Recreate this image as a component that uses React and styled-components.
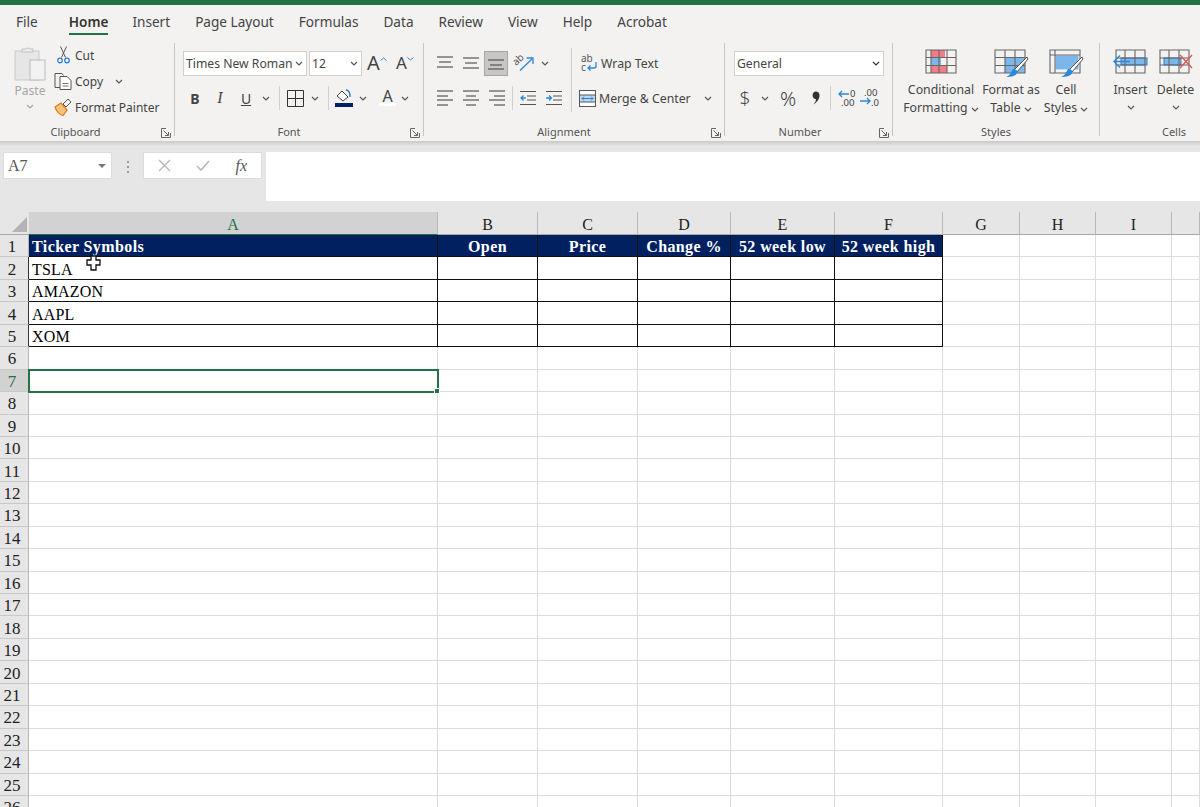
import React from 'react';
import styled, { createGlobalStyle } from 'styled-components';

const GlobalStyle = createGlobalStyle`
  html, body {
    margin: 0;
    padding: 0;
    background: #fff;
    overflow: hidden;
  }
  svg {
    overflow: visible;
  }
`;

const tabs = ['File', 'Home', 'Insert', 'Page Layout', 'Formulas', 'Data', 'Review', 'View', 'Help', 'Acrobat'];

const columns = [
  { name: 'A', width: 409 },
  { name: 'B', width: 100 },
  { name: 'C', width: 100 },
  { name: 'D', width: 93 },
  { name: 'E', width: 104 },
  { name: 'F', width: 108 },
  { name: 'G', width: 77 },
  { name: 'H', width: 76 },
  { name: 'I', width: 76 },
  { name: '', width: 28 },
];

const headings = ['Ticker Symbols', 'Open', 'Price', 'Change %', '52 week low', '52 week high'];
const tickers = ['TSLA', 'AMAZON', 'AAPL', 'XOM'];
const rowNumbers = Array.from({ length: 26 }, (_, i) => i + 1);

const Chev = ({ color = '#555' }) => (
  <svg width="8" height="5" viewBox="0 0 8 5">
    <path d="M1 1l3 3 3-3" fill="none" stroke={color} strokeWidth="1.2" />
  </svg>
);

const PasteIcon = () => (
  <svg width="32" height="35" viewBox="0 0 32 35">
    <rect x="1" y="5" width="24" height="29" fill="#e6e6e6" stroke="#c9c9c9" />
    <path d="M8 6V3h3a3 2 0 0 1 5 0h3v3z" fill="#ececec" stroke="#c2c2c2" />
    <rect x="16" y="14" width="15" height="20" fill="#f2f2f2" stroke="#bcbcbc" />
  </svg>
);

const ScissorsIcon = () => (
  <svg width="13" height="18" viewBox="0 0 13 18">
    <path d="M3.5 0.5l5 11M9.5 0.5l-5 11" fill="none" stroke="#555" strokeWidth="1" />
    <circle cx="3" cy="14.5" r="2.3" fill="none" stroke="#2b7cd3" strokeWidth="1.2" />
    <circle cx="10" cy="14.5" r="2.3" fill="none" stroke="#2b7cd3" strokeWidth="1.2" />
  </svg>
);

const CopyIcon = () => (
  <svg width="18" height="17" viewBox="0 0 18 17">
    <path d="M6 14.5H1V0.5h7l1.5 2" fill="none" stroke="#555" />
    <path d="M6 3.5h7l4 4v9H6z" fill="#fff" stroke="#555" />
    <path d="M8.5 10.5h6M8.5 13h6" stroke="#777" />
  </svg>
);

const PainterIcon = () => (
  <svg width="18" height="18" viewBox="0 0 18 18">
    <path d="M1 9l6-4 6 7-4 5.500C6 17 2 13 1 9z" fill="#f6c27c" stroke="#e07b1a" strokeWidth="1.2" />
    <path d="M9 6l5-5 3 3-5 5z" fill="#f3f2f1" stroke="#555" />
  </svg>
);

const BorderIcon = () => (
  <svg width="17" height="17" viewBox="0 0 17 17">
    <path d="M0.500 0.500h16v16h-16zM8.500 0.500v16M0.500 8.500h16" fill="none" stroke="#333" />
  </svg>
);

const FillIcon = () => (
  <svg width="18" height="18" viewBox="0 0 18 18">
    <path d="M7 2l6 6-5 4-6-5z" fill="#fff" stroke="#444" />
    <path d="M11 1c3 0 4 3 4 7" fill="none" stroke="#2b7cd3" strokeWidth="1.400" />
    <rect x="0" y="14" width="18" height="4" fill="#002060" />
  </svg>
);

const FontColorIcon = () => (
  <svg width="17" height="18" viewBox="0 0 17 18">
    <text x="8.500" y="12.500" textAnchor="middle" fontFamily="Noto Sans" fontSize="16" fill="#444">A</text>
    <rect x="0" y="14" width="17" height="3" fill="#fff" />
  </svg>
);

const LinesIcon = ({ lines }) => (
  <svg width="16" height="16" viewBox="0 0 16 16">
    {lines.map(([x1, x2, y]) => (
      <path key={`${x1}-${y}`} d={`M${x1} ${y}H${x2}`} stroke="#555" strokeWidth="1.200" />
    ))}
  </svg>
);

const OrientationIcon = () => (
  <svg width="20" height="18" viewBox="0 0 20 18">
    <text x="1" y="11" transform="rotate(-45 3 10)" fontFamily="Noto Sans" fontSize="10" fill="#555">ab</text>
    <path d="M6 16.500L18 5M12.500 4h6.500v6" fill="none" stroke="#2b88d8" strokeWidth="1.300" />
  </svg>
);

const WrapIcon = () => (
  <svg width="17" height="18" viewBox="0 0 17 18">
    <text x="0" y="8" fontFamily="Noto Sans" fontSize="10" fill="#555">ab</text>
    <text x="0" y="17" fontFamily="Noto Sans" fontSize="10" fill="#555">c</text>
    <path d="M15 8v4a2 2 0 0 1-2 2H7M9.500 11.500L7 14l2.500 2.500" fill="none" stroke="#2b88d8" strokeWidth="1.300" />
  </svg>
);

const MergeIcon = () => (
  <svg width="17" height="17" viewBox="0 0 17 17">
    <rect x="0.500" y="0.500" width="16" height="16" fill="#fff" stroke="#555" />
    <rect x="1" y="5" width="15" height="7" fill="#bcdcf4" />
    <path d="M0.500 5h16M0.500 12h16" stroke="#555" />
    <path d="M3 8.500h11M5 6.500l-2 2 2 2M12 6.500l2 2-2 2" fill="none" stroke="#2b7cd3" />
  </svg>
);

const IndentIcon = ({ flip }) => (
  <svg width="16" height="16" viewBox="0 0 16 16">
    <path d="M0 1.500h16M7 6h9M7 10h9M0 14.500h16" stroke="#555" strokeWidth="1.200" />
    <path
      d={flip ? 'M0 8h5M3 5.500L5.500 8 3 10.500' : 'M1 8h5M3.500 5.500L1 8l2.500 2.500'}
      fill="none"
      stroke="#2b88d8"
      strokeWidth="1.300"
    />
  </svg>
);

const CommaIcon = () => (
  <svg width="9" height="14" viewBox="0 0 9 14">
    <path d="M4.500 0.500a4 4 0 0 1 4 4c0 4-3 7-6 9 1.500-2 2.500-3.500 2.500-5.200a4 4 0 0 1-.5-7.800z" fill="#333" />
  </svg>
);

const DecimalIcon = ({ more }) => (
  <svg width="20" height="18" viewBox="0 0 20 18">
    {more ? (
      <>
        <text x="4" y="7" fontFamily="Noto Sans" fontSize="9.500" fill="#444">.00</text>
        <text x="11" y="17" fontFamily="Noto Sans" fontSize="9.500" fill="#444">.0</text>
        <path d="M0 12h10M7 9l3 3-3 3" fill="none" stroke="#2b88d8" strokeWidth="1.300" />
      </>
    ) : (
      <>
        <text x="12" y="8" fontFamily="Noto Sans" fontSize="9.500" fill="#444">0</text>
        <text x="3" y="17" fontFamily="Noto Sans" fontSize="9.500" fill="#444">.00</text>
        <path d="M1 5h10M4 2L1 5l3 3" fill="none" stroke="#2b88d8" strokeWidth="1.300" />
      </>
    )}
  </svg>
);

const ConditionalIcon = () => (
  <svg width="32" height="25" viewBox="0 0 32 25">
    <rect x="6" y="1" width="14" height="7" fill="#f47c84" />
    <rect x="6" y="9" width="10" height="7" fill="#7db7ea" />
    <rect x="6" y="16" width="16" height="8" fill="#f47c84" />
    <path d="M1 1h30v23H1zM1 8.500h30M1 16.500h30M6 1v23M14 1v23M22 1v23" fill="none" stroke="#666" strokeWidth="1.100" />
  </svg>
);

const BrushTip = () => (
  <>
    <path d="M33 8L20 21l3 2L34 10z" fill="#fff" stroke="#555" />
    <path d="M19 20c3 0 5 2 4 4-1 3-6 4-11 4 3-1 5-4 7-8z" fill="#2b88d8" />
  </>
);

const TableIcon = () => (
  <svg width="34" height="30" viewBox="0 0 34 30">
    <rect x="11" y="8" width="20" height="16" fill="#7db7ea" />
    <path d="M1 1h30v23H1zM1 8.500h30M1 16.500h30M11 1v23M21 1v23" fill="none" stroke="#666" strokeWidth="1.100" />
    <BrushTip />
  </svg>
);

const CellStylesIcon = () => (
  <svg width="34" height="30" viewBox="0 0 34 30">
    <rect x="6" y="6" width="24" height="15" fill="#7db7ea" stroke="#fff" />
    <path d="M1 1h30v23H1zM1 6h30M6 1v23" fill="none" stroke="#666" strokeWidth="1.100" />
    <BrushTip />
  </svg>
);

const InsertIcon = () => (
  <svg width="35" height="25" viewBox="0 0 35 25">
    <rect x="8" y="9" width="26" height="7" fill="#7db7ea" stroke="#2b7cd3" />
    <path d="M3 1h29v23H3zM3 9h29M3 16h29M12 1v23M22 1v23" fill="none" stroke="#666" strokeWidth="1.100" />
    <path d="M1 12.500h16M7 6.500l-6 6 6 6" fill="none" stroke="#2b88d8" strokeWidth="1.400" />
  </svg>
);

const DeleteIcon = () => (
  <svg width="34" height="25" viewBox="0 0 34 25">
    <rect x="5" y="9" width="17" height="7" fill="#7db7ea" stroke="#2b7cd3" />
    <path d="M1 1h29v23H1zM1 9h29M1 16h29M10 1v23M20 1v23" fill="none" stroke="#666" strokeWidth="1.100" />
    <path d="M21 6l12 13M33 6L21 19" stroke="#e8504a" strokeWidth="1.300" />
  </svg>
);

const LauncherIcon = () => (
  <svg width="10" height="10" viewBox="0 0 10 10">
    <path d="M9.500 5v4.500H0.500V0.500H5M2.500 2.500l5 5M7.500 4v3.500H4" fill="none" stroke="#666" />
  </svg>
);

const CrossIcon = () => (
  <svg width="13" height="13" viewBox="0 0 13 13">
    <path d="M1 1l11 11M12 1L1 12" stroke="#b9b9b9" strokeWidth="1.400" />
  </svg>
);

const CheckIcon = () => (
  <svg width="14" height="11" viewBox="0 0 14 11">
    <path d="M1 6l4 4 8-9" fill="none" stroke="#b9b9b9" strokeWidth="1.600" />
  </svg>
);

const PlusCursor = () => (
  <svg width="15" height="16" viewBox="0 0 15 16">
    <path d="M5 1h5v4h4v5h-4v5H5v-5H1V5h4z" fill="#fff" stroke="#111" strokeWidth="1.300" />
  </svg>
);

const App = () => (
  <Page>
    <GlobalStyle />
    <TitleStrip />
    <Ribbon>
      <TabBar>
        {tabs.map((tab) => (
          <Tab key={tab} $active={tab === 'Home'}>{tab}</Tab>
        ))}
      </TabBar>
      <Groups>
        <Group $width={175}>
          <ClipboardBody>
            <PasteButton>
              <PasteIcon />
              <PasteLabel>Paste</PasteLabel>
              <Chev color="#a6a6a6" />
            </PasteButton>
            <ClipboardList>
              <ClipboardRow><ClipIcon><ScissorsIcon /></ClipIcon>Cut</ClipboardRow>
              <ClipboardRow><ClipIcon><CopyIcon /></ClipIcon>Copy<ChevGap><Chev /></ChevGap></ClipboardRow>
              <ClipboardRow><ClipIcon><PainterIcon /></ClipIcon>Format Painter</ClipboardRow>
            </ClipboardList>
          </ClipboardBody>
          <GroupLabel $right={23}>Clipboard</GroupLabel>
          <Launcher><LauncherIcon /></Launcher>
        </Group>

        <Group $width={249}>
          <Stack $left={8}>
            <ToolRow>
              <SelectBox $width={124}>Times New Roman<Chev /></SelectBox>
              <SelectBox $width={53} $gap={2}>12<Chev /></SelectBox>
              <Tool $width={30}><GrowA>A</GrowA><CaretUp><svg width="7" height="4" viewBox="0 0 7 4"><path d="M0.500 3.500L3.500 1l3 2.500" fill="none" stroke="#2b88d8" /></svg></CaretUp></Tool>
              <Tool $width={26}><ShrinkA>A</ShrinkA><CaretUp><svg width="7" height="4" viewBox="0 0 7 4"><path d="M0.500 0.500L3.500 3l3-2.500" fill="none" stroke="#2b88d8" /></svg></CaretUp></Tool>
            </ToolRow>
            <ToolRow>
              <Tool $width={24}><BoldMark>B</BoldMark></Tool>
              <Tool $width={26}><ItalicMark>I</ItalicMark></Tool>
              <Tool $width={26}><UnderMark>U</UnderMark></Tool>
              <Tool $width={14}><Chev /></Tool>
              <Divider $left={6} $right={6} />
              <Tool $width={18}><BorderIcon /></Tool>
              <Tool $width={22}><Chev /></Tool>
              <Divider $left={2} $right={5} />
              <Tool $width={20}><FillIcon /></Tool>
              <Tool $width={18}><Chev /></Tool>
              <Tool $width={30}><FontColorIcon /></Tool>
              <Tool $width={6}><Chev /></Tool>
            </ToolRow>
          </Stack>
          <GroupLabel $right={20}>Font</GroupLabel>
          <Launcher><LauncherIcon /></Launcher>
        </Group>

        <Group $width={301}>
          <AlignBody>
            <Stack>
              <ToolRow>
                <Tool $width={26}><LinesIcon lines={[[0, 16, 2], [2, 14, 7], [0, 16, 12]]} /></Tool>
                <Tool $width={26}><LinesIcon lines={[[0, 16, 3], [2, 14, 8], [0, 16, 13]]} /></Tool>
                <ActiveTool><LinesIcon lines={[[0, 16, 5], [2, 14, 10], [0, 16, 14]]} /></ActiveTool>
                <Tool $width={32}><OrientationIcon /></Tool>
                <Tool $width={10}><Chev /></Tool>
              </ToolRow>
              <ToolRow>
                <Tool $width={26}><LinesIcon lines={[[0, 16, 1], [0, 11, 6], [0, 16, 10], [0, 11, 15]]} /></Tool>
                <Tool $width={26}><LinesIcon lines={[[0, 16, 1], [3, 13, 6], [0, 16, 10], [3, 13, 15]]} /></Tool>
                <Tool $width={26}><LinesIcon lines={[[0, 16, 1], [5, 16, 6], [0, 16, 10], [5, 16, 15]]} /></Tool>
                <Divider $left={2} $right={5} />
                <Tool $width={20}><IndentIcon /></Tool>
                <Tool $width={32}><IndentIcon flip /></Tool>
              </ToolRow>
            </Stack>
            <TallDivider />
            <Stack>
              <WrapRow $left={9}><WrapIcon /><span>Wrap Text</span></WrapRow>
              <WrapRow $left={7}><MergeIcon /><span>Merge &amp; Center</span><ChevGap $left={10}><Chev /></ChevGap></WrapRow>
            </Stack>
          </AlignBody>
          <GroupLabel $right={20}>Alignment</GroupLabel>
          <Launcher><LauncherIcon /></Launcher>
        </Group>

        <Group $width={168}>
          <Stack $left={9}>
            <ToolRow>
              <SelectBox $width={150}>General<Chev color="#333" /></SelectBox>
            </ToolRow>
            <ToolRow>
              <Tool $width={22}><SymbolMark>$</SymbolMark></Tool>
              <Tool $width={18}><Chev /></Tool>
              <Tool $width={28}><SymbolMark $size={20}>%</SymbolMark></Tool>
              <Tool $width={26}><CommaIcon /></Tool>
              <Divider $left={2} $right={7} />
              <Tool $width={20}><DecimalIcon /></Tool>
              <Tool $width={24}><DecimalIcon more /></Tool>
            </ToolRow>
          </Stack>
          <GroupLabel $right={17}>Number</GroupLabel>
          <Launcher><LauncherIcon /></Launcher>
        </Group>

        <Group $width={207}>
          <BigTools $left={13}>
            <BigTool $width={70}>
              <BigIcon><ConditionalIcon /></BigIcon>
              <span>Conditional</span>
              <span>Formatting <Chev /></span>
            </BigTool>
            <BigTool $width={70}>
              <BigIcon><TableIcon /></BigIcon>
              <span>Format as</span>
              <span>Table <Chev /></span>
            </BigTool>
            <BigTool $width={40}>
              <BigIcon><CellStylesIcon /></BigIcon>
              <span>Cell</span>
              <span>Styles <Chev /></span>
            </BigTool>
          </BigTools>
          <GroupLabel>Styles</GroupLabel>
        </Group>

        <Group $width={100} $last>
          <BigTools $left={8}>
            <BigTool $width={45}>
              <BigIcon><InsertIcon /></BigIcon>
              <span>Insert</span>
              <ChevLine><Chev /></ChevLine>
            </BigTool>
            <BigTool $width={45}>
              <BigIcon><DeleteIcon /></BigIcon>
              <span>Delete</span>
              <ChevLine><Chev /></ChevLine>
            </BigTool>
          </BigTools>
          <GroupLabel $left={48}>Cells</GroupLabel>
        </Group>
      </Groups>
    </Ribbon>

    <FormulaBar>
      <NameBox>A7<NameCaret /></NameBox>
      <GripDots><i /><i /><i /></GripDots>
      <FormulaButtons>
        <CrossIcon />
        <CheckIcon />
        <FxMark>fx</FxMark>
      </FormulaButtons>
      <FormulaInput />
    </FormulaBar>

    <Sheet>
      <CornerCell><CornerTriangle /></CornerCell>
      {columns.map((col) => (
        <ColumnHead key={col.name || 'rest'} $selected={col.name === 'A'}>{col.name}</ColumnHead>
      ))}
      {rowNumbers.map((row) => (
        <React.Fragment key={row}>
          <RowHead $selected={row === 7} $boxed={row > 1 && row <= 5}>{row}</RowHead>
          {columns.map((col, i) => {
            const boxed = row <= 5 && i < 6;
            return (
              <Cell
                key={col.name || 'rest'}
                $head={row === 1 && i < 6}
                $boxed={boxed}
                $first={i === 0}
                $selected={row === 7 && i === 0}
                $center={row === 1 && i > 0}
              >
                {row === 1 && headings[i]}
                {row > 1 && i === 0 && tickers[row - 2]}
                {row === 2 && i === 0 && <CursorMark><PlusCursor /></CursorMark>}
              </Cell>
            );
          })}
        </React.Fragment>
      ))}
    </Sheet>
  </Page>
);

export default App;

const Page = styled.div`
  width: 1200px;
  height: 807px;
  overflow: hidden;
  font-family: "Noto Sans", "Open Sans", sans-serif;
  color: #444;
`;

const TitleStrip = styled.div`
  height: 5px;
  background: #217346;
`;

const Ribbon = styled.div`
  height: 136px;
  background: #f3f2f1;
`;

const TabBar = styled.div`
  display: flex;
  align-items: flex-start;
  gap: 25px;
  height: 38px;
  padding-left: 16px;
`;

const Tab = styled.div`
  height: 30px;
  line-height: 33px;
  font-size: 13.600px;
  font-weight: ${(p) => (p.$active ? 600 : 400)};
  color: ${(p) => (p.$active ? '#333' : '#444')};
  box-sizing: border-box;
  border-bottom: 2px solid ${(p) => (p.$active ? '#217346' : 'transparent')};
  margin: ${(p) => (p.$active ? '0 -1px 0 6px' : '0')};
`;

const Groups = styled.div`
  display: flex;
  height: 93px;
`;

const Group = styled.div`
  position: relative;
  display: flex;
  flex-direction: column;
  width: ${(p) => p.$width}px;
  box-sizing: border-box;
  border-right: ${(p) => (p.$last ? 'none' : '1px solid #c8c6c4')};
`;

const GroupLabel = styled.div`
  margin-top: auto;
  margin-bottom: -3px;
  padding-left: ${(p) => p.$left || 0}px;
  padding-right: ${(p) => p.$right || 0}px;
  line-height: 14px;
  height: 14px;
  font-size: 11px;
  text-align: center;
  color: #555;
`;

const Launcher = styled.div`
  position: absolute;
  right: 3px;
  bottom: -2px;
  line-height: 0;
`;

const ClipboardBody = styled.div`
  display: flex;
  font-size: 12px;
`;

const PasteButton = styled.div`
  display: flex;
  flex-direction: column;
  align-items: center;
  width: 32px;
  margin-left: 14px;
  padding-top: 3px;
`;

const PasteLabel = styled.div`
  font-size: 12px;
  line-height: 16px;
  margin: 2px 0 5px;
  color: #a6a6a6;
`;

const ClipboardList = styled.div`
  display: flex;
  flex-direction: column;
  gap: 2px;
  margin-left: 8px;
`;

const ClipboardRow = styled.div`
  display: flex;
  align-items: center;
  height: 24px;
`;

const ClipIcon = styled.div`
  display: flex;
  justify-content: center;
  width: 18px;
  margin-right: 3px;
`;

const ChevGap = styled.span`
  display: inline-flex;
  margin-left: ${(p) => p.$left || 12}px;
`;

const Stack = styled.div`
  display: flex;
  flex-direction: column;
  gap: 11px;
  padding-top: 8px;
  padding-left: ${(p) => p.$left || 0}px;
`;

const ToolRow = styled.div`
  display: flex;
  align-items: center;
  height: 24px;
`;

const SelectBox = styled.div`
  display: flex;
  align-items: center;
  justify-content: space-between;
  box-sizing: border-box;
  width: ${(p) => p.$width}px;
  height: 25px;
  margin-left: ${(p) => p.$gap || 0}px;
  padding: 0 3px 0 2px;
  background: #fff;
  border: 1px solid #d2d0ce;
  font-size: 12.200px;
  color: #444;
  white-space: nowrap;
`;

const Tool = styled.div`
  display: flex;
  align-items: center;
  justify-content: center;
  flex: none;
  width: ${(p) => p.$width}px;
  height: 24px;
`;

const ActiveTool = styled(Tool)`
  box-sizing: border-box;
  width: 24px;
  height: 25px;
  background: #c8c6c4;
  border: 1px solid #a8a6a4;
`;

const GrowA = styled.span`
  font-size: 20px;
  line-height: 24px;
  color: #444;
`;

const ShrinkA = styled.span`
  font-size: 17px;
  line-height: 24px;
  color: #444;
`;

const CaretUp = styled.span`
  align-self: flex-start;
  margin-top: 4px;
  line-height: 0;
`;

const BoldMark = styled.span`
  font-size: 14px;
  font-weight: 700;
  color: #444;
`;

const ItalicMark = styled.span`
  font-family: "Liberation Serif", serif;
  font-style: italic;
  font-size: 16px;
  color: #444;
`;

const UnderMark = styled.span`
  font-size: 14px;
  text-decoration: underline;
  color: #444;
`;

const SymbolMark = styled.span`
  font-size: ${(p) => p.$size || 19}px;
  font-weight: 300;
  color: #444;
`;

const Divider = styled.div`
  flex: none;
  width: 1px;
  height: 24px;
  margin-left: ${(p) => p.$left}px;
  margin-right: ${(p) => p.$right}px;
  background: #d2d0ce;
`;

const AlignBody = styled.div`
  display: flex;
  padding-left: 8px;
`;

const TallDivider = styled.div`
  flex: none;
  width: 1px;
  height: 64px;
  margin: 5px 0 0 1px;
  background: #d2d0ce;
`;

const WrapRow = styled.div`
  display: flex;
  align-items: center;
  gap: 3px;
  height: 24px;
  padding-left: ${(p) => p.$left}px;
  font-size: 12.300px;
  white-space: nowrap;
`;

const BigTools = styled.div`
  display: flex;
  padding-left: ${(p) => p.$left}px;
`;

const BigTool = styled.div`
  display: flex;
  flex-direction: column;
  align-items: center;
  flex: none;
  width: ${(p) => p.$width}px;
  font-size: 12.300px;
  line-height: 17.500px;
  white-space: nowrap;
  color: #444;
`;

const BigIcon = styled.div`
  height: 38px;
  padding-top: 6px;
  box-sizing: border-box;
  line-height: 0;
`;

const ChevLine = styled.div`
  height: 14px;
  line-height: 14px;
`;

const FormulaBar = styled.div`
  display: flex;
  align-items: flex-start;
  box-sizing: border-box;
  height: 71px;
  padding: 11px 0 0 3px;
  background: linear-gradient(#c9c9c9, #e6e6e6 5px);
`;

const NameBox = styled.div`
  position: relative;
  box-sizing: border-box;
  width: 109px;
  height: 27px;
  padding-left: 4px;
  line-height: 26px;
  background: #fff;
  border: 1px solid #dcdcdc;
  font-family: "Liberation Serif", serif;
  font-size: 16px;
  color: #555;
`;

const NameCaret = styled.span`
  position: absolute;
  right: 5px;
  top: 11px;
  border-left: 4px solid transparent;
  border-right: 4px solid transparent;
  border-top: 4px solid #777;
`;

const GripDots = styled.div`
  display: flex;
  flex-direction: column;
  gap: 3px;
  margin: 9px 14px 0 15px;

  i {
    display: block;
    width: 2px;
    height: 2px;
    background: #9a9a9a;
  }
`;

const FormulaButtons = styled.div`
  display: flex;
  align-items: center;
  justify-content: space-between;
  box-sizing: border-box;
  width: 119px;
  height: 27px;
  padding: 0 14px;
  background: #fff;
  border: 1px solid #dcdcdc;
`;

const FxMark = styled.span`
  font-family: "Liberation Serif", serif;
  font-style: italic;
  font-size: 16px;
  color: #555;
`;

const FormulaInput = styled.div`
  flex: 1;
  height: 49px;
  margin-left: 4px;
  background: #fff;
`;

const Sheet = styled.div`
  display: grid;
  grid-template-columns: 29px ${columns.map((col) => `${col.width}px`).join(' ')};
  grid-template-rows: 23px;
  grid-auto-rows: 22.440px;
  font-family: "Liberation Serif", serif;
  font-size: 16px;
  color: #000;
  background: #fff;
`;

const CornerCell = styled.div`
  position: relative;
  background: #e6e6e6;
  border-bottom: 1px solid #a8a8a8;
  box-sizing: border-box;
`;

const CornerTriangle = styled.span`
  position: absolute;
  right: 2px;
  bottom: 2px;
  border-left: 15px solid transparent;
  border-bottom: 15px solid #b4b4b4;
`;

const ColumnHead = styled.div`
  display: flex;
  align-items: center;
  justify-content: center;
  box-sizing: border-box;
  padding-top: 3px;
  background: ${(p) => (p.$selected ? '#d2d2d2' : '#e6e6e6')};
  border-right: 1px solid #b8b8b8;
  border-bottom: 1px solid ${(p) => (p.$selected ? '#217346' : '#a8a8a8')};
  color: ${(p) => (p.$selected ? '#217346' : '#222')};
`;

const RowHead = styled.div`
  display: flex;
  align-items: center;
  justify-content: center;
  box-sizing: border-box;
  padding: 3px 4px 0 0;
  font-size: 17px;
  background: ${(p) => (p.$selected ? '#d2d2d2' : '#e6e6e6')};
  border-right: 1px solid ${(p) => (p.$selected ? '#217346' : p.$boxed ? '#333' : '#b8b8b8')};
  border-bottom: 1px solid #c8c8c8;
  color: ${(p) => (p.$selected ? '#217346' : '#222')};
`;

const Cell = styled.div`
  position: relative;
  display: flex;
  align-items: center;
  justify-content: ${(p) => (p.$center ? 'center' : 'flex-start')};
  box-sizing: border-box;
  padding-top: 3px;
  padding-left: ${(p) => (p.$first ? '3px' : '0')};
  white-space: nowrap;
  letter-spacing: ${(p) => (p.$head ? '0.4px' : '0.15px')};
  background: ${(p) => (p.$head ? '#002060' : '#fff')};
  color: ${(p) => (p.$head ? '#fff' : '#000')};
  font-weight: ${(p) => (p.$head ? 700 : 400)};
  border-right: 1px solid ${(p) => (p.$boxed ? '#111' : '#dcdcdc')};
  border-bottom: 1px solid ${(p) => (p.$boxed ? '#111' : '#dcdcdc')};

  ${(p) =>
    p.$selected &&
    `
    outline: 2px solid #217346;
    outline-offset: -1px;
    z-index: 2;

    &::after {
      content: '';
      position: absolute;
      right: -3px;
      bottom: -3px;
      width: 4px;
      height: 4px;
      background: #217346;
      border: 1px solid #fff;
    }
  `}
`;

const CursorMark = styled.span`
  position: absolute;
  left: 57px;
  top: -2px;
  line-height: 0;
  z-index: 3;
`;
